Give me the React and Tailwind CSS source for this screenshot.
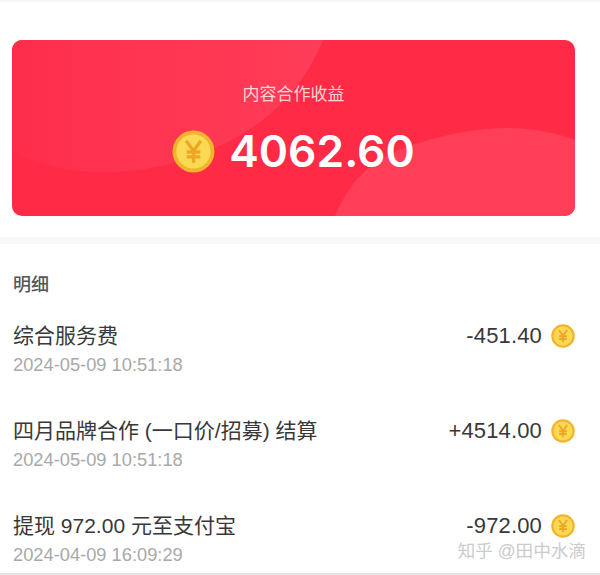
import React from "react";

const rows = [
  { title: "综合服务费", time: "2024-05-09 10:51:18", amount: "-451.40" },
  { title: "四月品牌合作 (一口价/招募) 结算", time: "2024-05-09 10:51:18", amount: "+4514.00" },
  { title: "提现 972.00 元至支付宝", time: "2024-04-09 16:09:29", amount: "-972.00" },
];

// gold yuan coin, used in the card and in each row
function Coin({ className }) {
  return (
    <svg viewBox="0 0 44 44" className={className}>
      <circle cx="22" cy="22" r="21.5" fill="#f3b32c" />
      <circle cx="22" cy="22" r="17.5" fill="#fbd955" />
      <path
        d="M14.5 11 L22 21.5 L29.5 11 M22 21.5 V33.5 M15 22.5 H29 M15 27.5 H29"
        fill="none"
        stroke="#eea625"
        strokeWidth="3.4"
      />
    </svg>
  );
}

function Row({ title, time, amount }) {
  return (
    <div className="flex h-[95px] justify-between pl-[13px] pr-[25px]">
      <div>
        <div className="h-[33px] text-[21px] leading-[33px] text-[#383838]">{title}</div>
        <div className="mt-[-2px] h-[30px] text-[18.3px] leading-[30px] text-[#a9a9a9]">{time}</div>
      </div>
      <div className="flex h-[33px] items-center gap-[9px]">
        <span className="text-[22px] leading-[33px] tracking-[0.15px] text-[#383838]">{amount}</span>
        <Coin className="h-6 w-6" />
      </div>
    </div>
  );
}

export default function App() {
  return (
    <div className="relative h-[575px] w-[600px] overflow-hidden bg-white font-['Liberation_Sans','Noto_Sans_CJK_SC',sans-serif]">
      <div className="h-[2px] bg-[#f6f6f6]" />

      {/* Earnings card */}
      <div className="ml-3 mt-[38px] w-[563px]">
        <div className="relative flex h-[176px] flex-col items-center overflow-hidden rounded-[10px] bg-[#fe2a46]">
          <svg viewBox="0 0 563 176" className="absolute inset-0 h-full w-full">
            <defs>
              <linearGradient id="topWave" x1="0" y1="0" x2="1" y2="0">
                <stop offset="0" stopColor="#fe2e4b" />
                <stop offset="1" stopColor="#ff3d58" />
              </linearGradient>
            </defs>
            <path d="M0 0 H311 C295 40 265 75 225 97 C175 125 130 132 90 132 C55 132 25 124 0 110 Z" fill="url(#topWave)" />
            <path d="M323 176 C340 135 365 117 400 105 C430 95 465 88 495 88 C520 88 545 93 563 100 V176 Z" fill="#ff3f58" />
          </svg>
          <div className="relative mt-[43px] text-[17px] leading-6 text-[#fbd3d8]">内容合作收益</div>
          <div className="relative mt-[17px] flex items-center gap-[14px]">
            <Coin className="h-[43px] w-[43px]" />
            <span className="font-['Inter'] text-[44.4px] font-semibold leading-[54px] text-white">4062.60</span>
          </div>
        </div>
      </div>

      <div className="mt-[21px] h-[7px] bg-[#f8f8f8]" />

      {/* Detail list */}
      <div className="mt-[29px] h-[24px] pl-[13px] text-[18px] font-medium leading-6 text-[#555555]">明细</div>
      <div className="mt-[22px]">
        {rows.map((row) => (
          <Row key={row.title} {...row} />
        ))}
      </div>

      {/* Watermark + bottom edge */}
      <div className="absolute right-[14px] top-[540px] text-[17.6px] leading-[22px] text-[#cbcbcb]">知乎 @田中水滴</div>
      <div className="absolute inset-x-0 bottom-0 h-[2px] bg-[#e4e4e4]" />
    </div>
  );
}
